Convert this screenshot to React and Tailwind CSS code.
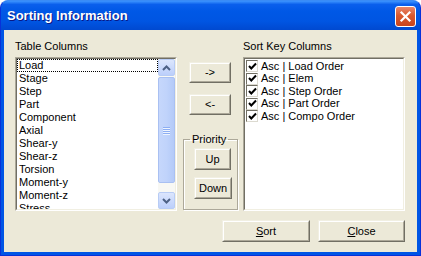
import React from "react";

const leftItems = ["Load","Stage","Step","Part","Component","Axial","Shear-y","Shear-z","Torsion","Moment-y","Moment-z","Stress"];
const rightItems = ["Asc | Load Order","Asc | Elem","Asc | Step Order","Asc | Part Order","Asc | Compo Order"];

function Btn({ className = "", children }) {
  return (
    <div className={"border border-[#F1EFE2] border-r-[#716F64] border-b-[#716F64] bg-[#ECE9D8] " + className}>
      <div className="w-full h-full border border-white border-r-[#ACA899] border-b-[#ACA899] flex items-center justify-center text-black">
        {children}
      </div>
    </div>
  );
}

function Sunken({ className = "", children }) {
  return (
    <div className={"border border-[#ACA899] border-r-white border-b-white " + className}>
      <div className="w-full h-full border border-[#716F64] border-r-[#F1EFE2] border-b-[#F1EFE2] bg-white overflow-hidden flex">
        {children}
      </div>
    </div>
  );
}

function Chevron({ up }) {
  return (
    <svg width="9" height="6" viewBox="0 0 9 6">
      <polyline points={up ? "1,5 4.5,1.5 8,5" : "1,1 4.5,4.5 8,1"} fill="none" stroke="#4D6185" strokeWidth="2" />
    </svg>
  );
}

export default function App() {
  return (
    <div className="w-[421px] h-[256px] flex flex-col rounded-t-[8px] bg-[#0055E5] border border-[#0831D9] border-t-[#3A8CF6] font-['Liberation_Sans',Arial,sans-serif] text-[11px] leading-[13px] text-black overflow-hidden">
      {/* title bar */}
      <div className="h-[29px] shrink-0 flex items-center justify-between pl-[6px] pr-[4px] bg-[linear-gradient(to_bottom,#3D95FF_0%,#0A5FEC_12%,#0058E6_35%,#0055E2_70%,#0049D0_100%)]">
        <span className="text-white font-bold text-[13px] leading-[16px] [text-shadow:1px_1px_0_#0A1883] mt-[1px]">Sorting Information</span>
        <div className="w-[21px] h-[21px] mt-[2px] rounded-[3px] border border-white bg-[linear-gradient(to_bottom,#E8866A_0%,#D9592F_45%,#C9441C_100%)] flex items-center justify-center">
          <svg width="13" height="13" viewBox="0 0 13 13">
            <line x1="2.5" y1="2.5" x2="10.5" y2="10.5" stroke="white" strokeWidth="2.2" strokeLinecap="square" />
            <line x1="10.5" y1="2.5" x2="2.5" y2="10.5" stroke="white" strokeWidth="2.2" strokeLinecap="square" />
          </svg>
        </div>
      </div>
      {/* body */}
      <div className="flex-1 mx-[3px] mb-[3px] bg-[#ECE9D8] flex flex-col pl-[11px] pr-[12px] pt-[10px]">
        <div className="flex">
          {/* left column */}
          <div className="w-[162px] flex flex-col">
            <div className="h-[13px] mb-[4px]">Table Columns</div>
            <Sunken className="h-[154px]">
              <div className="flex-1 flex flex-col">
                {leftItems.map((t, i) => (
                  <div key={t} className={"h-[13px] shrink-0 pl-[2px] whitespace-nowrap " + (i === 0 ? "outline outline-1 outline-dotted outline-black -outline-offset-1" : "")}>{t}</div>
                ))}
              </div>
              <div className="w-[17px] shrink-0 bg-[#F8F8F4] flex flex-col">
                <div className="h-[17px] rounded-[2px] border border-[#B8CCF5] bg-[linear-gradient(to_bottom,#DCE6FD,#BCCFFB)] flex items-center justify-center">
                  <Chevron up />
                </div>
                <div className="h-[106px] mt-[1px] rounded-[2px] border border-[#A9C0F2] bg-[linear-gradient(to_right,#C6D7FC,#C0D3FB_50%,#B4CAF8)] flex flex-col items-center justify-center gap-[1px]">
                  {[0,1,2,3].map(k => (
                    <div key={k} className="w-[7px] h-[1px] bg-[#8DAEF3] shadow-[0_1px_0_#EEF4FE]" />
                  ))}
                </div>
                <div className="flex-1" />
                <div className="h-[17px] rounded-[2px] border border-[#B8CCF5] bg-[linear-gradient(to_bottom,#DCE6FD,#BCCFFB)] flex items-center justify-center">
                  <Chevron />
                </div>
              </div>
            </Sunken>
          </div>
          {/* middle column */}
          <div className="w-[55px] ml-[6px] flex flex-col pt-[22px]">
            <Btn className="w-[42px] h-[21px] ml-[6px]">-&gt;</Btn>
            <Btn className="w-[42px] h-[21px] ml-[6px] mt-[11px]">&lt;-</Btn>
            <fieldset className="mt-[18px] h-[77px] border border-[#ACA899] shadow-[1px_1px_0_white,inset_1px_1px_0_white] flex flex-col">
              <legend className="ml-[6px] px-[2px] leading-[13px]">Priority</legend>
              <Btn className="w-[37px] h-[22px] ml-[10px] mt-[2px]">Up</Btn>
              <Btn className="w-[38px] h-[22px] ml-[10px] mt-[7px]">Down</Btn>
            </fieldset>
          </div>
          {/* right column */}
          <div className="w-[162px] ml-[5px] flex flex-col">
            <div className="h-[13px] mb-[4px]">Sort Key Columns</div>
            <Sunken className="h-[154px]">
              <div className="flex-1 flex flex-col pt-[1px]">
                {rightItems.map(t => (
                  <div key={t} className="h-[12.5px] shrink-0 flex items-center pl-[1px] whitespace-nowrap">
                    <div className="w-[12px] h-[12px] border border-[#716F64] border-r-[#DCDAD0] border-b-[#DCDAD0] bg-white flex items-center justify-center mr-[3px]">
                      <svg width="9" height="9" viewBox="0 0 9 9">
                        <polyline points="1,4 3.3,6.5 8,1.5" fill="none" stroke="black" strokeWidth="2" />
                      </svg>
                    </div>
                    <span>{t}</span>
                  </div>
                ))}
              </div>
            </Sunken>
          </div>
        </div>
        {/* bottom buttons */}
        <div className="flex justify-end gap-[8px] mt-[9px]">
          <Btn className="w-[88px] h-[22px]"><span><span className="underline">S</span>ort</span></Btn>
          <Btn className="w-[87px] h-[22px]"><span><span className="underline">C</span>lose</span></Btn>
        </div>
      </div>
    </div>
  );
}
